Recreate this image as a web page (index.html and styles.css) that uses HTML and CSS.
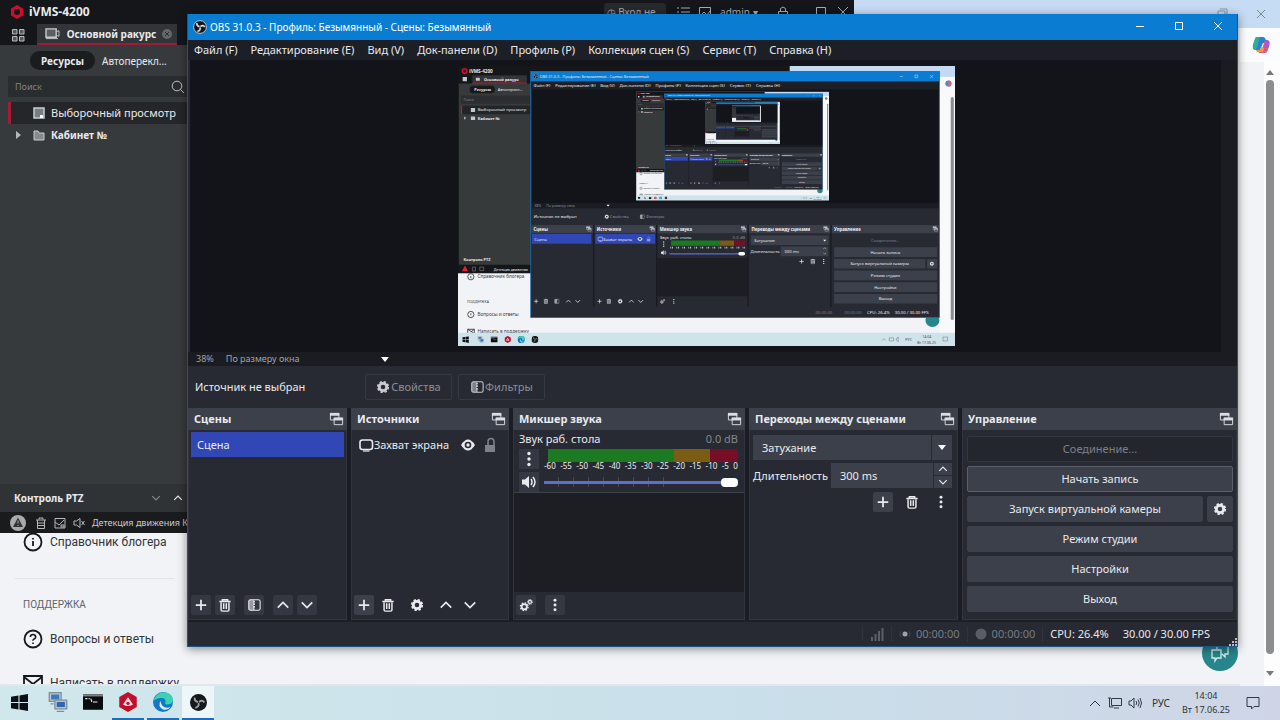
FILE: index.html
```
<!DOCTYPE html>
<html lang="ru">
<head>
  <meta charset="UTF-8" />
  <meta name="viewport" content="width=device-width, initial-scale=1.0"/>
  <title>OBS 31.0.3</title>
  <link rel="stylesheet" href="styles.css">
</head>
<body>

  <!-- Shared icons -->
  <svg class="sprite" aria-hidden="true">
    <symbol id="i-plus" viewBox="0 0 16 16"><path d="M8 2v12M2 8h12" stroke="currentColor" stroke-width="2"/></symbol>
    <symbol id="i-trash" viewBox="0 0 16 16"><path d="M1.500 4h13M5 3.500V2h6v1.500M3.500 5v8.500q0 1.500 1.500 1.500h6q1.500 0 1.500-1.500V5M6.500 6v6.500M9.500 6v6.500" fill="none" stroke="currentColor" stroke-width="1.700"/></symbol>
    <symbol id="i-filter" viewBox="0 0 16 16"><rect x="2" y="2" width="13" height="12" rx="2" fill="none" stroke="currentColor" stroke-width="1.200"/><path d="M2 2h6v12H2z" fill="currentColor" opacity=".55"/><path d="M8 3v10" stroke="currentColor" stroke-width="2" stroke-dasharray="2 1"/></symbol>
    <symbol id="i-up" viewBox="0 0 16 16"><path d="M2 11l6-6 6 6" fill="none" stroke="currentColor" stroke-width="1.900"/></symbol>
    <symbol id="i-down" viewBox="0 0 16 16"><path d="M2 5l6 6 6-6" fill="none" stroke="currentColor" stroke-width="1.900"/></symbol>
    <symbol id="i-dots" viewBox="0 0 16 16"><circle cx="8" cy="2.500" r="1.700" fill="currentColor"/><circle cx="8" cy="8" r="1.700" fill="currentColor"/><circle cx="8" cy="13.500" r="1.700" fill="currentColor"/></symbol>
    <symbol id="i-gear" viewBox="0 0 16 16"><circle cx="8" cy="8" r="4.200" fill="none" stroke="currentColor" stroke-width="3.200"/><circle cx="8" cy="8" r="6" fill="none" stroke="currentColor" stroke-width="2" stroke-dasharray="2.700 2.010"/></symbol>
    <symbol id="i-gears" viewBox="0 0 16 16"><g fill="none" stroke="currentColor"><circle cx="6" cy="10" r="3" stroke-width="2"/><circle cx="6" cy="10" r="4.400" stroke-width="1.500" stroke-dasharray="1.800 1.650"/><circle cx="12.500" cy="4.500" r="1.700" stroke-width="1.400"/><circle cx="12.500" cy="4.500" r="2.800" stroke-width="1" stroke-dasharray="1.200 1"/></g></symbol>
    <symbol id="i-dock" viewBox="0 0 16 16"><path d="M1.500 1.500h9v7h-9z" fill="none" stroke="#dcdde2" stroke-width="1"/><path d="M1 1h10v3H1z" fill="#dcdde2"/><path d="M5.500 6.500h9v7h-9z" fill="#3c404b" stroke="#dcdde2"/><path d="M5 6h10v3H5z" fill="#dcdde2"/></symbol>
    <symbol id="i-monitor" viewBox="0 0 16 16"><rect x="2" y="3" width="12.500" height="9.500" rx="2.500" fill="none" stroke="currentColor" stroke-width="1.600"/><path d="M5 14h6.500" stroke="currentColor" stroke-width="1.200"/></symbol>
    <symbol id="i-eye" viewBox="0 0 16 16"><path d="M1 8q7-11 14 0-7 11-14 0z" fill="currentColor"/><circle cx="8" cy="8" r="3.300" fill="#272a33"/><circle cx="8" cy="8" r="1.700" fill="currentColor"/></symbol>
    <symbol id="i-lock" viewBox="0 0 16 16"><path d="M3 8h10v7H3z" fill="currentColor"/><path d="M6 8V5q0-3.500 3-3.500T12 5v3" fill="none" stroke="currentColor" stroke-width="1.600"/></symbol>
    <symbol id="i-speaker" viewBox="0 0 16 16"><path d="M1 5.500h3L8 2v12L4 10.500H1z" fill="currentColor"/><path d="M10 5q2 3 0 6M12 3q4 5 0 10" fill="none" stroke="currentColor" stroke-width="1.500"/></symbol>
    <symbol id="i-obs" viewBox="0 0 16 16"><circle cx="8" cy="8" r="7.300" fill="#15161a" stroke="#cfd3d8"/><g fill="none" stroke="#d7dade" stroke-width="1.900"><path d="M7.500 7.500Q4 7 4.500 3.500"/><path d="M8.500 7.500q3-2.500 5 .5"/><path d="M8 8.500q1 3.500-3 4.500"/></g></symbol>
    <symbol id="i-obs-dark" viewBox="0 0 16 16"><circle cx="8" cy="8" r="8" fill="#17181c"/><g fill="none" stroke="#9a9ea3" stroke-width="1.800"><path d="M7.500 7.500Q4 7 4.500 3.500"/><path d="M8.500 7.500q3-2.500 5 .5"/><path d="M8 8.500q1 3.500-3 4.500"/></g></symbol>
    <symbol id="i-win" viewBox="0 0 16 16"><path d="M0 2.500l7-1v6H0zM8 1.300L16 0v7.500H8zM0 8.500h7v6l-7-1zM8 8.500h8V16l-8-1.300z" fill="#0c1014"/></symbol>
    <symbol id="i-ivms" viewBox="0 0 16 16"><path d="M8 0l7 4v8l-7 4-7-4V4z" fill="#c30d2c"/><path d="M8 4q2 3 4 6-4 2.500-8 0 2-3 4-6z" fill="#f3d7dc"/><circle cx="8" cy="9" r="1.300" fill="#c30d2c"/></symbol>
    <symbol id="i-edge" viewBox="0 0 16 16"><circle cx="8" cy="8" r="8" fill="#1478c8"/><path d="M1 5Q4 0 9 .2q7 .8 7 6.300-.5 3.500-5 3.500-2-.2-1-2 .5-3-3-3.200Q3 4.500 1 7z" fill="#3fd0b4"/><path d="M6 7q-2.500 4.500 2 7 4 1 6-2-4 1.500-6.500-1Q6 9 6 7z" fill="#d7edf5"/></symbol>
    <symbol id="i-pcs" viewBox="0 0 16 16"><g stroke="#7f8e9b"><path d="M1 .5h9.500v7H1z" fill="#b9c6d1"/><path d="M2.500 2h6.500v4H2.500z" fill="#3f78b8" stroke="none"/><path d="M5.500 6.500H15v7H5.500z" fill="#b9c6d1"/><path d="M7 8h6.500v4H7z" fill="#2f66ad" stroke="none"/><path d="M2 9.500h2.500M7 15.500h6"/></g></symbol>
    <symbol id="i-cmd" viewBox="0 0 18 16"><path d="M0 1h18v14H0z" fill="#0b0c0d"/><path d="M0 1h18v2H0z" fill="#7a8187"/><path d="M2 5h2M5 5h1M7 5l1 3M9 8h4" stroke="#e8eaeb"/></symbol>

    <!-- Captured desktop, drawn again inside the preview at smaller scales -->
    <symbol id="desk" viewBox="0 0 1280 720">
      <rect width="1280" height="720" fill="#f1f3f6"/>
      <rect width="1280" height="28" fill="#c3daf2"/>
      <path d="M1238 28h42v658h-42z" fill="#f7f9fb"/>
      <circle cx="1261" cy="45" r="8" fill="#4e8fd0"/><path d="M1261 37a8 8 0 0 1 0 16z" fill="#dd6477"/>
      <rect x="1267" y="80" width="8" height="573" rx="4" fill="#8b8d8f"/>
      <rect width="853" height="533" fill="#141619"/>
      <rect x="2" y="45" width="851" height="466" fill="#363a3b"/>
      <rect x="37" y="24" width="140" height="20" fill="#323437"/><path d="M37 44h140" stroke="#a51c38" stroke-width="3"/>
      <rect x="30" y="51" width="65" height="19" rx="9" fill="#17191b"/>
      <rect x="8" y="76" width="179" height="21" fill="#2b2d30"/>
      <rect x="8" y="102" width="179" height="22" fill="#222427"/><path d="M9 102v22" stroke="#bc1f3a" stroke-width="3"/>
      <circle cx="17" cy="13" r="6" fill="#252024" stroke="#c8102e" stroke-width="4"/>
      <g fill="#e9eaeb" font-size="10">
        <text x="29" y="17" font-weight="bold" font-size="12">iVMS-4200</text>
        <text x="67" y="38" font-weight="bold">Основной ракурс</text>
        <text x="42" y="65" font-weight="bold">Ресурсы</text>
        <text x="102" y="64">Автоперекл...</text>
        <text x="14" y="90" font-size="9" fill="#7f8284">Поиск</text>
        <text x="51" y="117" font-size="11">Выборочный просмотр</text>
        <text x="51" y="138" font-weight="bold">Кабинет №</text>
        <text x="14" y="502" font-weight="bold">Контроль PTZ</text>
        <text x="92" y="526" font-size="9">Детекция движения</text>
      </g>
      <path d="M33 108h11v10H33zM33 130h11v9H33zM46 30h10v8H46zM12 28h11v11H12zM16 130l5 4-5 4z" fill="#c4c7c9"/>
      <path d="M18 513l8 15H10z" fill="#e8202f"/>
      <path d="M37 517h8v10h-8zM56 517h10v9H56z" fill="none" stroke="#bbb"/>
      <g fill="#3b4045" font-size="12"><text x="50" y="546">Справочник блогера</text><text x="50" y="644">Вопросы и ответы</text><text x="50" y="686">Написать в поддержку</text><text x="23" y="609" font-size="9">ПОДДЕРЖКА</text></g>
      <g fill="none" stroke="#252a2e" stroke-width="2"><circle cx="33" cy="542" r="8"/><circle cx="33" cy="639" r="8"/><path d="M25 688v-11h17v11l-17-11M42 677l-9 7"/><path d="M33 540v6M33 636v5"/></g>
      <circle cx="1220" cy="653" r="18" fill="#27868b"/>
      <rect y="686" width="1280" height="34" fill="#cfe3eb"/>
      <use href="#i-win" x="11" y="695" width="17" height="17"/><use href="#i-pcs" x="50" y="695" width="17" height="17"/><use href="#i-cmd" x="84" y="695" width="18" height="17"/><use href="#i-ivms" x="119" y="694" width="18" height="18"/><use href="#i-edge" x="153" y="694" width="19" height="19"/><use href="#i-obs-dark" x="189" y="694" width="18" height="18"/>
      <g fill="#3b444b" font-size="10"><text x="1150" y="707">РУС</text><text x="1194" y="700" font-size="9">14:04</text><text x="1181" y="714" font-size="9">Вт 17.06.25</text></g>
      <path d="M1090 706l5-5 5 5M1109 699h11v8h-11zM1127 701v4l5 4v-12zM1247 697h12v10h-12z" fill="none" stroke="#47535c"/>
      <rect x="187" y="14" width="1051" height="633" fill="#272a33" stroke="#1b70b7" stroke-width="2"/>
      <rect x="187" y="14" width="1051" height="26" fill="#0a7dd2"/>
      <use href="#i-obs" x="193" y="20" width="14" height="14"/>
      <path d="M1136 27h8M1175 23h7v7h-7zM1214 23l8 8M1222 23l-8 8" fill="none" stroke="#fff"/>
      <rect x="188" y="40" width="1049" height="20" fill="#1d1f26"/><rect x="190" y="60" width="1046" height="292" fill="#13141a"/>
      <rect x="190" y="352" width="1046" height="14" fill="#1b1c22"/>
      <g fill="#e9eaee" font-size="11">
        <text x="210" y="31" font-size="10">OBS 31.0.3 - Профиль: Безымянный - Сцены: Безымянный</text>
        <text x="194" y="54">Файл (F)</text><text x="250" y="54">Редактирование (E)</text><text x="366" y="54">Вид (V)</text><text x="415" y="54">Док-панели (D)</text><text x="508" y="54">Профиль (P)</text><text x="585" y="54">Коллекция сцен (S)</text><text x="699" y="54">Сервис (T)</text><text x="766" y="54">Справка (H)</text>
        <text x="195" y="391">Источник не выбран</text>
        <g fill="#8c8e96"><text x="390" y="391">Свойства</text><text x="483" y="391">Фильтры</text><text x="196" y="362" font-size="9">38%</text><text x="227" y="362" font-size="9">По размеру окна</text></g>
      </g>
      <path d="M382 357h8l-4 4z" fill="#fff"/>
      <g fill="#3c404b"><path d="M188 409h159v21H188zM351 409h158v21H351zM513 409h232v21H513zM748 409h210v21H748zM961 409h275v21H961z"/><path d="M753 436h200v24H753zM830 464h122v25H830zM967 466h265v25H967zM967 496h235v25H967zM1206 496h26v25h-26zM967 526h265v25H967zM967 556h265v25H967zM967 586h265v25H967z"/></g>
      <path d="M190 432h153v25H190zM353 432h154v25H353z" fill="#3047b5"/>
      <path d="M513 494h232v98H513z" fill="#1d1e23"/>
      <path d="M349 409v210M511 409v210M746 409v210M959 409v210" stroke="#181a20" stroke-width="3"/>
      <g fill="#f0f1f4" font-size="11" font-weight="bold"><text x="194" y="424">Сцены</text><text x="357" y="424">Источники</text><text x="519" y="424">Микшер звука</text><text x="755" y="424">Переходы между сценами</text><text x="967" y="424">Управление</text></g>
      <use href="#i-dock" x="329" y="412" width="15" height="15"/><use href="#i-dock" x="492" y="412" width="15" height="15"/><use href="#i-dock" x="727" y="412" width="15" height="15"/><use href="#i-dock" x="939" y="412" width="15" height="15"/><use href="#i-dock" x="1220" y="412" width="15" height="15"/>
      <g fill="#e9eaee" font-size="11"><text x="196" y="449">Сцена</text><text x="373" y="449">Захват экрана</text><text x="519" y="444">Звук раб. стола</text><text x="761" y="452">Затухание</text><text x="752" y="480">Длительность</text><text x="839" y="480">300 ms</text>
        <g text-anchor="middle"><text x="1099" y="453" fill="#7d7f87">Соединение...</text><text x="1099" y="483">Начать запись</text><text x="1084" y="513">Запуск виртуальной камеры</text><text x="1099" y="543">Режим студии</text><text x="1099" y="573">Настройки</text><text x="1099" y="603">Выход</text></g>
        <text x="706" y="444" fill="#8c8e96">0.0 dB</text><text x="1052" y="639">CPU: 26.4%</text><text x="1123" y="639">30.00 / 30.00 FPS</text><text x="919" y="639" fill="#777a83">00:00:00</text><text x="994" y="639" fill="#777a83">00:00:00</text></g>
      <path d="M548 449h126v13H548z" fill="#1b7a22"/><path d="M674 449h36v13h-36z" fill="#7a5c14"/><path d="M710 449h28v13h-28z" fill="#760e27"/>
      <path d="M546 467h192" stroke="#bbb" stroke-width="5" stroke-dasharray="2 2 3 8.500"/><path d="M544 483h194" stroke="#5b6fd0" stroke-width="3"/><rect x="721" y="478" width="17" height="9" rx="4" fill="#fff"/>
      <path d="M939 447h8l-4 4z" fill="#fff"/>
      <g color="#e9eaee"><use href="#i-monitor" x="358" y="437" width="16" height="16"/><use href="#i-eye" x="460" y="437" width="16" height="16"/><use href="#i-lock" x="483" y="438" width="14" height="14" opacity=".5"/><use href="#i-up" x="938" y="464" width="10" height="10"/><use href="#i-down" x="938" y="477" width="10" height="10"/><use href="#i-gear" x="376" y="381" width="13" height="13"/><use href="#i-filter" x="467" y="381" width="13" height="13"/><use href="#i-speaker" x="521" y="472" width="16" height="16"/><use href="#i-dots" x="521" y="450" width="16" height="16"/><use href="#i-plus" x="876" y="495" width="15" height="15"/><use href="#i-trash" x="905" y="495" width="15" height="15"/><use href="#i-dots" x="933" y="495" width="15" height="15"/><use href="#i-gear" x="1212" y="502" width="13" height="13"/><use href="#i-plus" x="194" y="598" width="14" height="14"/><use href="#i-trash" x="219" y="598" width="14" height="14"/><use href="#i-filter" x="247" y="598" width="14" height="14"/><use href="#i-up" x="276" y="597" width="16" height="16"/><use href="#i-down" x="300" y="597" width="16" height="16"/><use href="#i-plus" x="357" y="598" width="14" height="14"/><use href="#i-trash" x="381" y="598" width="14" height="14"/><use href="#i-gear" x="410" y="598" width="14" height="14"/><use href="#i-up" x="438" y="597" width="16" height="16"/><use href="#i-down" x="462" y="597" width="16" height="16"/><use href="#i-gears" x="519" y="598" width="14" height="14"/><use href="#i-dots" x="548" y="598" width="14" height="14"/></g>
    </symbol>
  </svg>

  <div class="desktop">

    <!-- Browser window at the back -->
    <section class="browser">
      <div class="browser-title">
        <svg class="ic14" viewBox="0 0 14 14"><path d="M2 4h7v7H2zM4 2h7v7" fill="none" stroke="#8796a5"/></svg>
        <svg class="ic14" viewBox="0 0 14 14"><path d="M3 3l8 8M11 3l-8 8" stroke="#7d8790"/></svg>
      </div>
      <div class="browser-body">
        <div class="page">
          <nav class="links">
            <a href="#"><svg class="ic20" viewBox="0 0 20 20"><circle cx="10" cy="10" r="8.500" fill="none" stroke="#16191c" stroke-width="1.800"/><path d="M10 9v5M10 6v1.500" stroke="#16191c" stroke-width="1.800"/></svg>Справочник блогера</a>
            <hr>
            <h4>ПОДДЕРЖКА</h4>
            <a href="#"><svg class="ic20" viewBox="0 0 20 20"><circle cx="10" cy="10" r="8.500" fill="none" stroke="#16191c" stroke-width="1.800"/><path d="M7.300 8q.2-2.500 2.700-2.500T12.700 8q0 1.300-1.500 2T10 11.800M10 13.500V15" fill="none" stroke="#16191c" stroke-width="1.600"/></svg>Вопросы и ответы</a>
            <a href="#"><svg class="ic20" viewBox="0 0 20 20"><path d="M1 3h18v14H1zM1 4l9 7 9-7" fill="none" stroke="#16191c" stroke-width="1.800"/></svg>Написать в поддержку</a>
          </nav>
        </div>
        <div class="browser-edge">
          <svg class="copilot" viewBox="0 0 20 20"><path d="M6 2h6q2 0 2.500 2L16 8h-4L9 15H5q-4 0-3-5l2-6q.5-2 2-2z" fill="#2d7fd3"/><path d="M2 10l2-6q.5-2 2-2h3L7 9l-2 6q-4 0-3-5z" fill="#2fae93"/><path d="M8 18h6q2 0 2.500-2l2-6q1-5-3-5l-2 1-2 7q-1 4-4 2 0 3 .5 3z" fill="#e5567b"/><path d="M15 5q4 0 3 5l-1 3h-4l2-8z" fill="#9e5ae0"/><path d="M5 15h4l1-3 3 1-1 4H7q-2 0-2-2z" fill="#f09a3e"/></svg>
          <div class="track"><i class="tri-up"></i><div class="thumb"></div><i class="tri-down"></i></div>
        </div>
      </div>
      <button class="chat" aria-label="Чат"><svg viewBox="0 0 20 20"><path d="M7 6V2h11v9h-3v3l-3-3M2 7h9v8H7l-2 3v-3H2z" fill="none" stroke="#d7f0f0" stroke-width="1.300"/></svg></button>
    </section>

    <!-- iVMS window -->
    <section class="ivms">
      <header class="ivms-title">
        <svg class="ic14" viewBox="0 0 14 14"><path d="M7 0l6 3.500v7L7 14l-6-3.500v-7z" fill="#c8102e"/><circle cx="7" cy="7" r="3" fill="#17181b"/></svg>
        <strong>iVMS-4200</strong>
        <div class="ivms-tools">
          <button class="login">◷ Вход не...</button>
          <svg class="ic14" viewBox="0 0 14 14"><path d="M1 3h2M5 3h9M1 7h2M5 7h9M1 11h2M5 11h9" stroke="#a9abad"/></svg>
          <svg class="ic14" viewBox="0 0 14 14"><path d="M1.500 2.500h11v10h-11zM2 11l4-4 3 3 3-4" fill="none" stroke="#a9abad"/></svg>
          <span>admin ▾</span>
          <svg class="ic14 lock" viewBox="0 0 14 14"><path d="M2.500 6.500h9v6h-9zM4.500 6V3.500q2.500-3 5 0V6" fill="none" stroke="#a9abad"/></svg>
          <svg class="ic14" viewBox="0 0 14 14"><path d="M2.500 2.500h9v9h-9z" fill="none" stroke="#a9abad"/></svg>
          <svg class="ic14" viewBox="0 0 14 14"><path d="M2 2l10 10M12 2L2 12" stroke="#a9abad"/></svg>
        </div>
      </header>
      <div class="ivms-tabs">
        <svg class="ic14" viewBox="0 0 14 14"><path d="M1.500 1.500h4.500v4.500H1.500zM8.500 1.500h4.500v4.500H8.500zM1.500 8.500h4.500v4.500H1.500zM8.500 8.500h4.500v4.500H8.500z" fill="#55585b" stroke="#b8babc"/></svg>
        <div class="ivms-tab">
          <svg viewBox="0 0 18 14" width="17" height="13"><path d="M2 2h11v9H2z" fill="#5b5e60" stroke="#c8cacc" stroke-width="1.500"/><path d="M13 5l3-1v6l-3-1M2 12.500h13" fill="none" stroke="#c8cacc"/></svg>
          <strong>Основной ракурс</strong>
          <svg viewBox="0 0 10 10" width="10" height="10"><circle cx="5" cy="5" r="5" fill="#64676a"/><path d="M3 3l4 4M7 3L3 7" stroke="#2c2e31"/></svg>
        </div>
      </div>
      <div class="ivms-panel">
        <div class="pills"><button class="pill active">Ресурсы</button><button class="pill">Автоперекл...</button></div>
        <label class="search">
          <input type="text" placeholder="Поиск" aria-label="Поиск">
          <svg class="ic14" viewBox="0 0 14 14"><circle cx="6" cy="6" r="4.800" fill="none" stroke="#bfc1c3"/><path d="M9.500 9.500L13 13" stroke="#bfc1c3"/></svg>
        </label>
        <ul class="tree">
          <li class="selected"><svg viewBox="0 0 12 12" width="12" height="12"><path d="M1 1h10v10H1z" fill="#777d84" stroke="#c9cdd1" stroke-width="1.500"/><path d="M7 8h3v3H7z" fill="#fff"/></svg>Выборочный просмотр</li>
          <li><i class="tri-right"></i><svg viewBox="0 0 12 12" width="12" height="12"><path d="M1 2h4l1 2h5v7H1z" fill="#868a8e" stroke="#c9cdd1"/></svg><strong>Кабинет №</strong></li>
        </ul>
        <div class="ptz"><strong>Контроль PTZ</strong><svg viewBox="0 0 16 16" width="10" height="10" class="faint"><use href="#i-down"/></svg><svg viewBox="0 0 16 16" width="10" height="10"><use href="#i-up"/></svg></div>
      </div>
      <footer class="ivms-status">
        <svg viewBox="0 0 16 16" width="16" height="16"><circle cx="8" cy="8" r="8" fill="#aaa"/><path d="M8 2.500l5 9.500H3z" fill="#333"/><path d="M8 5.500v3M8 10v1" stroke="#aaa"/></svg>
        <svg viewBox="0 0 12 12" width="12" height="12"><path d="M1 3h10M4 2.500V1h4v1.500M2.500 3v8.500h7V3M3 6h6M3 8.500h6" fill="none" stroke="#b6b8ba"/></svg>
        <svg viewBox="0 0 12 12" width="12" height="12"><path d="M1 1.500h10v9.500H1zM1 5l4 3 5-5M7 8h3v2H7z" fill="none" stroke="#b6b8ba"/></svg>
        <svg viewBox="0 0 12 12" width="12" height="12"><path d="M1 4h2.500L7 1.500v9L3.500 8H1zM8.500 4l3 4M11.500 4l-3 4" fill="none" stroke="#b6b8ba"/></svg>
        <span>Детекция движения Ко</span>
      </footer>
    </section>

    <!-- OBS window -->
    <main class="obs">
      <header class="obs-title">
        <svg class="ic14"><use href="#i-obs"/></svg>
        <span>OBS 31.0.3 - Профиль: Безымянный - Сцены: Безымянный</span>
        <div class="win-buttons">
          <button aria-label="Свернуть"><svg viewBox="0 0 10 10"><path d="M1 5.500h8" stroke="#fff"/></svg></button>
          <button aria-label="Развернуть"><svg viewBox="0 0 10 10"><path d="M1.500 1.500h7v7h-7z" fill="none" stroke="#fff"/></svg></button>
          <button aria-label="Закрыть"><svg viewBox="0 0 10 10"><path d="M1 1l8 8M9 1L1 9" stroke="#fff"/></svg></button>
        </div>
      </header>
      <nav class="menu">
        <button>Файл (F)</button><button>Редактирование (E)</button><button>Вид (V)</button><button>Док-панели (D)</button><button>Профиль (P)</button><button>Коллекция сцен (S)</button><button>Сервис (T)</button><button>Справка (H)</button>
      </nav>

      <div class="preview">
        <svg viewBox="0 0 1280 720" role="img" aria-label="Захват экрана">
          <use href="#desk" width="1280" height="720"/>
          <svg x="458" y="66" width="496" height="280" viewBox="0 0 1280 720" preserveAspectRatio="none">
            <use href="#desk" width="1280" height="720"/>
            <svg x="458" y="66" width="496" height="280" viewBox="0 0 1280 720" preserveAspectRatio="none">
              <use href="#desk" width="1280" height="720"/>
              <use href="#desk" x="458" y="66" width="496" height="280"/>
            </svg>
          </svg>
        </svg>
      </div>
      <div class="zoom-row"><span>38%</span><span class="fit">По размеру окна</span><i class="tri-down light"></i></div>

      <div class="source-bar">
        <span>Источник не выбран</span>
        <button disabled><svg class="ic14"><use href="#i-gear"/></svg>Свойства</button>
        <button disabled><svg class="ic14"><use href="#i-filter"/></svg>Фильтры</button>
      </div>

      <div class="docks">
        <section class="dock">
          <h2>Сцены<svg><use href="#i-dock"/></svg></h2>
          <ul class="list"><li class="current">Сцена</li></ul>
          <div class="dock-tools">
            <button aria-label="Добавить"><svg><use href="#i-plus"/></svg></button>
            <button aria-label="Удалить"><svg><use href="#i-trash"/></svg></button>
            <button aria-label="Фильтры" class="spaced"><svg><use href="#i-filter"/></svg></button>
            <button aria-label="Вверх" class="spaced"><svg><use href="#i-up"/></svg></button>
            <button aria-label="Вниз"><svg><use href="#i-down"/></svg></button>
          </div>
        </section>

        <section class="dock">
          <h2>Источники<svg><use href="#i-dock"/></svg></h2>
          <ul class="list">
            <li class="source"><svg><use href="#i-monitor"/></svg><span>Захват экрана</span>
              <button aria-label="Видимость"><svg><use href="#i-eye"/></svg></button>
              <button aria-label="Блокировка" class="faint"><svg><use href="#i-lock"/></svg></button></li>
          </ul>
          <div class="dock-tools plain">
            <button aria-label="Добавить" class="raised"><svg><use href="#i-plus"/></svg></button>
            <button aria-label="Удалить"><svg><use href="#i-trash"/></svg></button>
            <button aria-label="Настроить" class="spaced"><svg><use href="#i-gear"/></svg></button>
            <button aria-label="Вверх" class="spaced"><svg><use href="#i-up"/></svg></button>
            <button aria-label="Вниз"><svg><use href="#i-down"/></svg></button>
          </div>
        </section>

        <section class="dock">
          <h2>Микшер звука<svg><use href="#i-dock"/></svg></h2>
          <div class="mixer">
            <div class="mixer-name"><label for="volume">Звук раб. стола</label><span>0.0 dB</span></div>
            <div class="mixer-row">
              <button aria-label="Меню"><svg><use href="#i-dots"/></svg></button>
              <div class="meter-box">
                <div class="meter"><i class="green"></i><i class="amber"></i><i class="red"></i></div>
                <div class="scale"><span>-60</span><span>-55</span><span>-50</span><span>-45</span><span>-40</span><span>-35</span><span>-30</span><span>-25</span><span>-20</span><span>-15</span><span>-10</span><span>-5</span><span>0</span></div>
              </div>
            </div>
            <div class="mixer-row">
              <button aria-label="Звук"><svg><use href="#i-speaker"/></svg></button>
              <input type="range" id="volume" min="0" max="100" value="100">
            </div>
          </div>
          <div class="mixer-empty"></div>
          <div class="dock-tools">
            <button aria-label="Дополнительно"><svg><use href="#i-gears"/></svg></button>
            <button aria-label="Меню микшера" class="spaced"><svg><use href="#i-dots"/></svg></button>
          </div>
        </section>

        <section class="dock">
          <h2>Переходы между сценами<svg><use href="#i-dock"/></svg></h2>
          <div class="transitions">
            <div class="combo"><select aria-label="Переход"><option>Затухание</option></select><i class="tri-down light"></i></div>
            <div class="duration">
              <label for="duration">Длительность</label>
              <input type="text" id="duration" value="300 ms">
              <div class="spin"><button aria-label="Больше"><svg><use href="#i-up"/></svg></button><button aria-label="Меньше"><svg><use href="#i-down"/></svg></button></div>
            </div>
            <div class="dock-tools plain end">
              <button aria-label="Добавить" class="raised"><svg><use href="#i-plus"/></svg></button>
              <button aria-label="Удалить"><svg><use href="#i-trash"/></svg></button>
              <button aria-label="Меню"><svg><use href="#i-dots"/></svg></button>
            </div>
          </div>
        </section>

        <section class="dock">
          <h2>Управление<svg><use href="#i-dock"/></svg></h2>
          <div class="controls">
            <button disabled>Соединение...</button>
            <button class="focus">Начать запись</button>
            <div class="pair"><button>Запуск виртуальной камеры</button><button class="small" aria-label="Настройки камеры"><svg class="ic14"><use href="#i-gear"/></svg></button></div>
            <button>Режим студии</button>
            <button>Настройки</button>
            <button>Выход</button>
          </div>
        </section>
      </div>

      <footer class="statusbar">
        <span class="cell"><svg class="ic14" viewBox="0 0 14 14"><path d="M2 10v4M5.500 7v7M9 4v10M12.500 1v13" stroke="#5c5f68" stroke-width="2"/></svg></span>
        <span class="cell dim"><svg class="ic12" viewBox="0 0 12 12"><circle cx="6" cy="6" r="2.500" fill="#a0a2a8"/><path d="M2 3q-2 3 0 6M10 3q2 3 0 6" fill="none" stroke="#3f424b"/></svg>00:00:00</span>
        <span class="cell dim"><svg class="ic12" viewBox="0 0 12 12"><circle cx="6" cy="6" r="5.500" fill="#5a5d65"/></svg>00:00:00</span>
        <span class="cell">CPU: 26.4%</span>
        <span class="fps">30.00 / 30.00 FPS</span>
        <svg class="grip" viewBox="0 0 8 8"><path d="M6 0h2v2H6zM3 3h2v2H3zM6 3h2v2H6zM0 6h2v2H0zM3 6h2v2H3zM6 6h2v2H6z" fill="#b9bbc2"/></svg>
      </footer>
    </main>

    <!-- Taskbar -->
    <footer class="taskbar">
      <button aria-label="Пуск"><svg class="t17"><use href="#i-win"/></svg></button>
      <button aria-label="Диспетчер"><svg class="t20"><use href="#i-pcs"/></svg></button>
      <button aria-label="Командная строка"><svg class="t20"><use href="#i-cmd"/></svg></button>
      <button aria-label="iVMS" class="open"><svg class="t20"><use href="#i-ivms"/></svg></button>
      <button aria-label="Edge" class="open"><svg class="t20"><use href="#i-edge"/></svg></button>
      <button aria-label="OBS" class="open front"><svg class="t17"><use href="#i-obs-dark"/></svg></button>
      <div class="tray">
        <svg class="ic14" viewBox="0 0 14 14"><path d="M2 10l5-5 5 5" fill="none" stroke="#333b42"/></svg>
        <svg class="ic14" viewBox="0 0 14 14"><path d="M3.500 2.500h10v7h-10zM6 12h5M0 2h3M1.500 2v9h4" fill="none" stroke="#333b42"/></svg>
        <svg class="ic14" viewBox="0 0 14 14"><path d="M1 5h2l3-3v10L3 9H1zM8 5q1.500 2 0 4M10 3.500q2.500 3.500 0 7M12 2q3 5 0 10" fill="none" stroke="#333b42"/></svg>
        <span>РУС</span>
        <time>14:04<br>Вт 17.06.25</time>
        <svg class="ic14" viewBox="0 0 14 14"><path d="M1 1.500h12v9H8l-2.500 2.500v-2.500H1z" fill="none" stroke="#333b42"/></svg>
      </div>
    </footer>
  </div>

</body>
</html>
```
FILE: styles.css
```
* {
  box-sizing: border-box;
}

body {
  margin: 0;
  font-family: "Noto Sans", "Open Sans", sans-serif;
  font-size: 11px;
  line-height: 16px;
  color: #e9eaee;
}

button {
  font: inherit;
  color: inherit;
  background: none;
  border: 0;
  padding: 0;
  white-space: nowrap;
}

ul, h2, h4 {
  margin: 0;
  padding: 0;
  list-style: none;
}

svg {
  flex: none;
}

.sprite {
  position: absolute;
  width: 0;
  height: 0;
}

.ic12 { width: 12px; height: 12px; }
.ic14 { width: 14px; height: 14px; }
.ic20 { width: 20px; height: 20px; }

.faint { opacity: 0.45; }

.tri-up, .tri-down {
  width: 0;
  height: 0;
  border: 4px solid transparent;
}
.tri-up { border-top: 0; border-bottom: 5px solid #77797b; }
.tri-down { border-bottom: 0; border-top: 5px solid #77797b; }
.tri-down.light { border-top-color: #fff; }

.desktop {
  position: relative;
  min-height: 100vh;
  overflow: hidden;
}

/* Browser */
.browser {
  position: absolute;
  inset: 0 0 34px 0;
  display: flex;
  flex-direction: column;
  background: #f1f3f6;
}

.browser-title {
  height: 28px;
  display: flex;
  justify-content: flex-end;
  align-items: center;
  gap: 24px;
  padding-right: 12px;
  background: #c6dcf4;
}

.browser-body {
  flex: 1;
  display: flex;
  min-height: 0;
}

.page {
  flex: 1;
  display: flex;
  flex-direction: column;
  justify-content: flex-end;
  overflow: hidden;
  border-bottom: 2px solid #e3e6ea;
}

.links {
  width: 187px;
  height: 152px;
  padding-left: 23px;
}

.links a {
  display: flex;
  align-items: center;
  gap: 7px;
  height: 20px;
  color: #30353a;
  font-family: Roboto, sans-serif;
  font-size: 12px;
  text-decoration: none;
  white-space: nowrap;
}

.links a + a { margin-top: 24px; }

.links hr {
  margin: 26px 12px 18px -8px;
  border: 0;
  border-top: 1px solid #e0e3e7;
}

.links h4 {
  margin-bottom: 16px;
  color: #5d6369;
  font: 10px/16px Roboto, sans-serif;
}

.browser-edge {
  width: 40px;
  display: flex;
  flex-direction: column;
  align-items: flex-end;
  background: linear-gradient(to right, #f1f3f6 24px, #fdfdfe 24px);
  border-top: 34px solid #fbfcfe;
}

.copilot {
  width: 20px;
  height: 20px;
  margin: -27px 9px 15px 0;
}

.track {
  flex: 1;
  width: 20px;
  display: flex;
  flex-direction: column;
  align-items: center;
  gap: 5px;
  padding-bottom: 10px;
}

.thumb {
  flex: 1;
  width: 8px;
  margin-bottom: 12px;
  border-radius: 4px;
  background: #8b8d8f;
}

.chat {
  position: absolute;
  right: 42px;
  bottom: 15px;
  width: 36px;
  height: 36px;
  padding: 8px;
  border-radius: 50%;
  background: #27868b;
}

/* iVMS */
.ivms {
  position: absolute;
  top: 0;
  left: 0;
  width: calc(67% - 4px);
  height: 533px;
  display: flex;
  flex-direction: column;
  background: #141619;
}

.ivms-title {
  display: flex;
  align-items: center;
  gap: 5px;
  height: 24px;
  padding-left: 10px;
  font-size: 12px;
}

.ivms-tools {
  margin-left: auto;
  display: flex;
  align-items: center;
  gap: 8px;
  padding-right: 4px;
  color: #a9abad;
  font-size: 10px;
}

.login {
  width: 62px;
  height: 18px;
  margin-right: 2px;
  border-radius: 3px;
  background: #27292c;
}

.lock { margin: 0 16px 0 10px; }

.ivms-tabs {
  display: flex;
  align-items: center;
  gap: 12px;
  height: 21px;
  padding-left: 11px;
}

.ivms-tab {
  width: 140px;
  height: 21px;
  display: flex;
  align-items: center;
  justify-content: space-between;
  padding: 0 5px 0 7px;
  background: #323437;
  border-bottom: 2px solid #9d1b35;
  font-size: 10px;
}

.ivms-panel {
  flex: 1;
  width: 187px;
  display: flex;
  flex-direction: column;
  padding: 6px 0 0 8px;
  background: #373a3c;
}

.pills {
  display: flex;
  gap: 7px;
  padding-left: 22px;
}

.pill {
  height: 19px;
  font-size: 10px;
}

.pill.active {
  width: 65px;
  border-radius: 10px;
  background: #1a1c1e;
  font-weight: bold;
}

.search {
  display: flex;
  align-items: center;
  height: 21px;
  margin: 6px 0 5px;
  padding: 0 2px 0 7px;
  background: #2a2d2f;
}

.search input {
  flex: 1;
  min-width: 0;
  padding: 0;
  border: 0;
  background: none;
  color: #e9eaee;
  font: 9px/16px "Noto Sans", sans-serif;
}

.search input::placeholder { color: #7f8284; }

.tree li {
  display: flex;
  align-items: center;
  gap: 6px;
  height: 21px;
  padding-left: 8px;
  white-space: nowrap;
}

.tree strong { font-size: 10px; }

.tree .selected {
  height: 22px;
  padding-left: 22px;
  border-left: 3px solid #a81b36;
  background: #242629;
}

.tri-right {
  width: 5px;
  margin-right: 6px;
  border: 4px solid transparent;
  border-right: 0;
  border-left: 5px solid #b5b8ba;
}

.ptz {
  display: flex;
  align-items: center;
  gap: 12px;
  height: 28px;
  margin: auto 0 0 -8px;
  padding: 0 4px 0 14px;
  background: #303335;
  font-size: 10px;
}

.ptz strong { margin-right: auto; }

.ivms-status {
  display: flex;
  align-items: center;
  gap: 7px;
  height: 21px;
  padding-left: 10px;
  background: #1a1b1d;
  color: #c9cbcd;
  font-size: 9px;
}

.ivms-status svg:first-child { margin-right: 2px; }

/* OBS window */
.obs {
  position: absolute;
  inset: 14px 42px 73px 187px;
  display: flex;
  flex-direction: column;
  border: 1px solid #1c5585;
  border-top: 0;
  background: #272a33;
  box-shadow: 0 2px 9px rgba(0, 0, 0, 0.45);
}

.obs-title {
  display: flex;
  align-items: center;
  gap: 3px;
  height: 26px;
  padding-left: 5px;
  background: #0a7dd2;
  color: #fff;
  font-size: 10px;
}

.win-buttons {
  margin-left: auto;
  display: flex;
}

.win-buttons button {
  width: 39px;
  height: 26px;
}

.win-buttons svg {
  width: 10px;
  height: 10px;
}

.menu {
  display: flex;
  gap: 13px;
  height: 20px;
  padding-left: 6px;
  background: #1d1f26;
}

.preview {
  flex: 1;
  min-height: 0;
  display: flex;
  justify-content: center;
  padding: 6px 14px 6px 0;
  margin-left: 2px;
  background: linear-gradient(to left, #1b1c22 16px, #13141a 16px);
}

.preview > svg {
  height: 100%;
  aspect-ratio: 16 / 9;
}

.zoom-row {
  display: flex;
  align-items: center;
  gap: 12px;
  height: 14px;
  padding-left: 8px;
  background: #1b1c22;
  color: #a0a1a7;
  font-size: 9px;
}

.zoom-row .fit { width: 143px; }

.source-bar {
  display: flex;
  align-items: center;
  gap: 6px;
  height: 42px;
  padding-left: 7px;
}

.source-bar span { width: 164px; }

.source-bar button {
  display: flex;
  align-items: center;
  justify-content: center;
  gap: 1px;
  width: 87px;
  height: 26px;
  border: 1px solid #363942;
  border-radius: 2px;
  color: #8c8e96;
}

.source-bar svg { color: #c9cad0; }

/* Docks */
.docks {
  display: grid;
  grid-template-columns: 159fr 158fr 232fr 209fr 275fr;
  gap: 4px;
  height: 212px;
  background: #1b1d24;
}

.dock {
  display: flex;
  flex-direction: column;
  min-width: 0;
  border: 1px solid #32353f;
  background: #272a33;
}

.dock h2 {
  display: flex;
  justify-content: space-between;
  align-items: center;
  height: 22px;
  margin: -1px;
  padding: 0 3px 0 6px;
  background: #3c404b;
  font-size: 11px;
  line-height: 16px;
  white-space: nowrap;
}

.dock h2 svg {
  width: 15px;
  height: 15px;
}

.list { padding: 3px 2px; }

.list li {
  display: flex;
  align-items: center;
  height: 25px;
  padding: 0 6px;
}

.list .current { background: #3047b5; }

.list svg {
  width: 16px;
  height: 16px;
}

.list button {
  height: 16px;
  margin-left: 6px;
}

.list .source { padding: 0 8px 0 4px; }
.list span { margin-right: auto; white-space: nowrap; }

.dock-tools {
  display: flex;
  gap: 4px;
  margin-top: auto;
  padding: 3px 2px 4px;
}

.dock-tools button {
  display: flex;
  align-items: center;
  justify-content: center;
  width: 20px;
  height: 20px;
  border-radius: 2px;
  background: #353842;
}

.dock-tools.plain button { background: none; }
.dock-tools.plain .raised { background: #3c404b; }
.dock-tools .spaced { margin-left: 5px; }
.dock-tools svg { width: 14px; height: 14px; }

.mixer {
  display: flex;
  flex-direction: column;
  gap: 2px;
  height: 64px;
  padding: 2px 6px 0 5px;
  border-bottom: 1px solid #3c404b;
}

.mixer-name {
  display: flex;
  justify-content: space-between;
  height: 16px;
}

.mixer-name span { color: #84868e; }

.mixer-row {
  display: flex;
  gap: 5px;
}

.mixer-row button {
  width: 20px;
  height: 20px;
  background: #353842;
}

.mixer-row svg {
  width: 16px;
  height: 16px;
  margin-top: 2px;
}

.meter-box { flex: 1; }

.meter {
  display: flex;
  height: 13px;
  margin-left: 4px;
}

.green { flex: 126; background: #1b7a22; }
.amber { flex: 36; background: #7a5c14; }
.red { flex: 28; background: #760e27; }

.scale {
  display: flex;
  justify-content: space-between;
  font-size: 8px;
  line-height: 8px;
}

.mixer-row input {
  flex: 1;
  min-width: 0;
  height: 20px;
  margin: 0;
  appearance: none;
  background:
    linear-gradient(#5b6fd0, #5b6fd0) center / 100% 3px no-repeat,
    repeating-linear-gradient(to right, transparent 0 14px, #474a56 14px 15px) left center / 66% 10px no-repeat;
}

.mixer-row input::-webkit-slider-thumb {
  appearance: none;
  width: 17px;
  height: 9px;
  border-radius: 4px;
  background: #fff;
}

.mixer-empty {
  flex: 1;
  background: #1d1e23;
}

.transitions { padding: 6px 5px 0 3px; }

.combo {
  display: flex;
  align-items: center;
  height: 25px;
  padding-right: 6px;
  background: #3c404b;
}

.combo select {
  flex: 1;
  height: 25px;
  margin-right: 6px;
  padding: 0 9px;
  appearance: none;
  border: 0;
  border-right: 1px solid #272a33;
  background: none;
  color: inherit;
  font: inherit;
}

.duration {
  display: flex;
  align-items: center;
  margin: 3px 0 4px;
}

.duration label { width: 78px; }

.duration input {
  flex: 1;
  min-width: 0;
  height: 25px;
  padding: 0 9px;
  border: 0;
  background: #3c404b;
  color: inherit;
  font: inherit;
}

.spin {
  display: grid;
  width: 18px;
  height: 25px;
  margin-left: 1px;
  gap: 1px;
}

.spin button {
  display: flex;
  align-items: center;
  justify-content: center;
  background: #3c404b;
}

.spin svg { width: 10px; height: 10px; }

.end {
  justify-content: flex-end;
  gap: 9px;
  padding: 0 1px;
}

.controls {
  display: flex;
  flex-direction: column;
  gap: 4px;
  padding: 7px 3px 0 4px;
}

.controls button {
  height: 26px;
  border: 1px solid #3c404b;
  border-radius: 2px;
  background: #3c404b;
}

.controls button:disabled {
  border-color: #343741;
  background: #24262e;
  color: #7d7f87;
}

.controls .focus { border-color: #5b5f6b; }

.pair {
  display: flex;
  gap: 4px;
}

.pair button { flex: 1; }

.pair .small {
  display: flex;
  flex: none;
  align-items: center;
  justify-content: center;
  width: 26px;
}

/* Status bar */
.statusbar {
  display: flex;
  align-items: center;
  justify-content: flex-end;
  height: 26px;
  border-top: 2px solid #1d1f26;
}

.cell {
  display: flex;
  align-items: center;
  gap: 5px;
  padding: 0 7px;
  border-left: 1px solid #30333c;
}

.dim { color: #777a83; }
.fps { padding: 0 19px 0 7px; }

.grip {
  align-self: flex-end;
  width: 8px;
  height: 8px;
}

/* Taskbar */
.taskbar {
  position: absolute;
  inset: auto 0 0 0;
  display: flex;
  height: 34px;
  gap: 3px;
  padding-left: 3px;
  background: linear-gradient(to right, #d0e8ec, #c9dfea 60%, #cfd5e6);
}

.taskbar button {
  display: flex;
  align-items: center;
  justify-content: center;
  width: 32px;
  border-bottom: 2px solid transparent;
}

.taskbar .open { border-color: #1a6fc4; }
.taskbar .front { background: #edf6f8; }
.taskbar button:first-child { margin-right: 4px; }

.t17 { width: 17px; height: 17px; }
.t20 { width: 20px; height: 20px; }

.tray {
  margin-left: auto;
  display: flex;
  align-items: center;
  gap: 6px;
  padding-right: 20px;
  color: #2c343b;
  font-size: 10px;
}

.tray span { margin-left: 4px; }

.tray time {
  margin: 0 10px 0 6px;
  font-size: 9px;
  line-height: 14px;
  text-align: center;
}
```
